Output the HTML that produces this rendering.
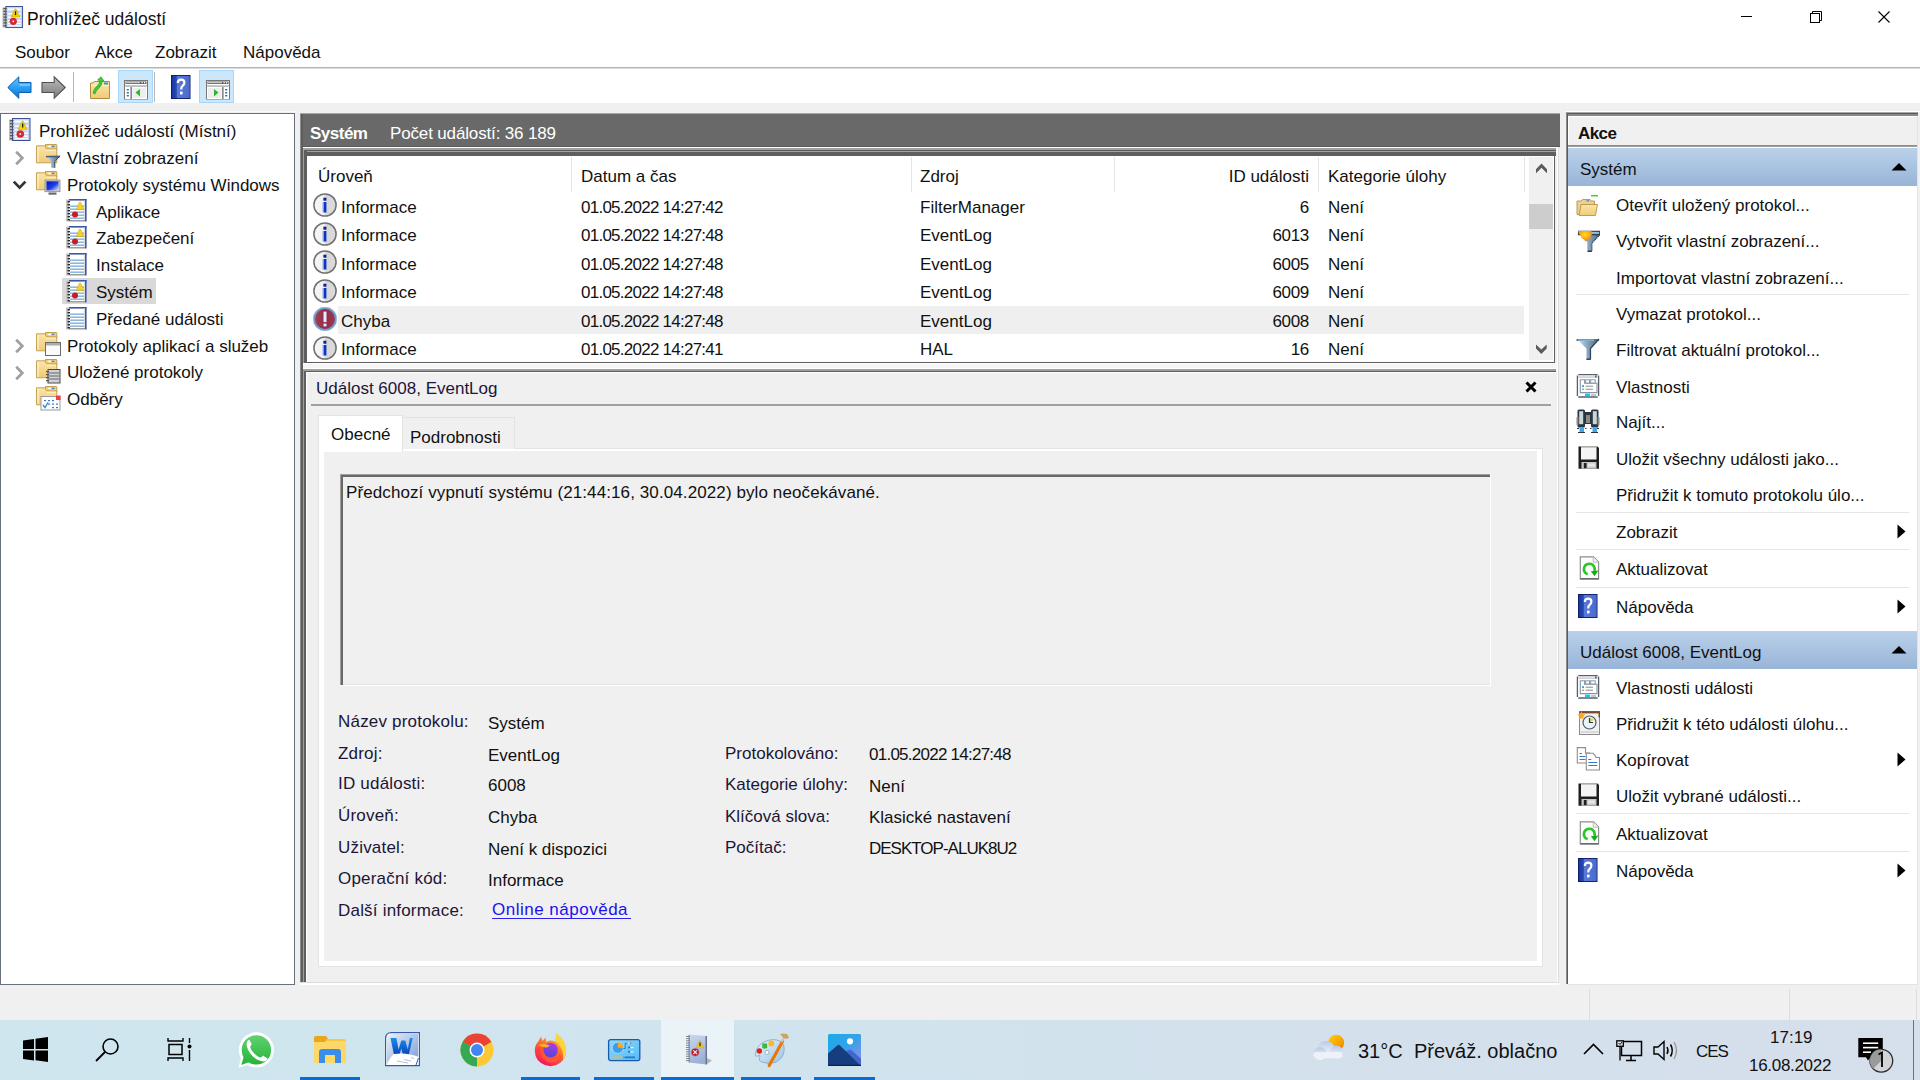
<!DOCTYPE html>
<html><head><meta charset="utf-8">
<style>
*{margin:0;padding:0;box-sizing:border-box}
html,body{width:1920px;height:1080px;overflow:hidden;background:#f0f0f0;font-family:"Liberation Sans",sans-serif;color:#000;position:relative}
.a{position:absolute}
.t{position:absolute;font-size:17px;line-height:20px;white-space:nowrap;color:#111}
svg{position:absolute;overflow:visible}
</style></head><body>
<svg width="0" height="0" style="left:0;top:0">
<defs>
 <linearGradient id="gInfo" x1="0" y1="0" x2="1" y2="0"><stop offset="0" stop-color="#f6f6f6"/><stop offset="0.45" stop-color="#f2f2f2"/><stop offset="0.55" stop-color="#d6d6d6"/><stop offset="1" stop-color="#dcdcdc"/></linearGradient>
 <linearGradient id="gErr" x1="0" y1="0" x2="1" y2="0"><stop offset="0" stop-color="#a2405a"/><stop offset="0.5" stop-color="#962a48"/><stop offset="1" stop-color="#9a3a55"/></linearGradient>
 <linearGradient id="gFold" x1="0" y1="0" x2="0" y2="1"><stop offset="0" stop-color="#fbe5a6"/><stop offset="1" stop-color="#efcb78"/></linearGradient>
 <linearGradient id="gBack" x1="0" y1="0" x2="0" y2="1"><stop offset="0" stop-color="#6cc4ff"/><stop offset="0.5" stop-color="#2aa0f2"/><stop offset="1" stop-color="#0a6ed0"/></linearGradient>
 <linearGradient id="gFwd" x1="0" y1="0" x2="0" y2="1"><stop offset="0" stop-color="#bcbcbc"/><stop offset="1" stop-color="#7a7a7a"/></linearGradient>
 <linearGradient id="gHelp" x1="0" y1="0" x2="1" y2="0"><stop offset="0" stop-color="#1838a8"/><stop offset="0.25" stop-color="#2848b0"/><stop offset="0.3" stop-color="#5a7ad8"/><stop offset="1" stop-color="#4a6ad0"/></linearGradient>
 <linearGradient id="gFunB" x1="0" y1="0" x2="1" y2="0"><stop offset="0" stop-color="#e8f4fc"/><stop offset="0.35" stop-color="#9ab8d0"/><stop offset="1" stop-color="#4a6078"/></linearGradient>
 <linearGradient id="gScr" x1="0" y1="0" x2="1" y2="1"><stop offset="0" stop-color="#0010c8"/><stop offset="0.55" stop-color="#2040e0"/><stop offset="1" stop-color="#e0e8ff"/></linearGradient>

 <symbol id="log" viewBox="0 0 22 24">
  <rect x="1" y="1.5" width="3" height="22" fill="#c4c4c4"/>
  <rect x="4" y="1" width="17.5" height="22.5" fill="#fff"/>
  <rect x="4" y="1" width="17.5" height="1.6" fill="#3b57a8"/>
  <rect x="20" y="1" width="1.6" height="22.5" fill="#3b57a8"/>
  <rect x="4" y="22" width="16" height="1.5" fill="#9c9c9c"/>
  <rect x="18.8" y="2.6" width="1.2" height="19.4" fill="#dcdcdc"/>
  <g fill="#5f9bd0"><rect x="5" y="7.6" width="14" height="1.1"/><rect x="5" y="10.6" width="14" height="1.1"/><rect x="5" y="13.6" width="14" height="1.1"/><rect x="5" y="16.6" width="14" height="1.1"/><rect x="5" y="19.6" width="14" height="1.1"/></g>
  <g fill="#2a2a2a"><rect x="2.5" y="3" width="2.5" height="1.4"/><rect x="2.5" y="6" width="2.5" height="1.4"/><rect x="2.5" y="9" width="2.5" height="1.4"/><rect x="2.5" y="12" width="2.5" height="1.4"/><rect x="2.5" y="15" width="2.5" height="1.4"/><rect x="2.5" y="18" width="2.5" height="1.4"/><rect x="2.5" y="21" width="2.5" height="1.4"/></g>
 </symbol>
 <symbol id="logwe" viewBox="0 0 22 24">
  <use href="#log" width="22" height="24"/>
  <path d="M14.2 4.4 Q15 3.6 15.8 4.4 L18.9 11.6 H11.3 Z" fill="#f2d41e" stroke="#c8a010" stroke-width="0.5"/>
  <circle cx="10" cy="16.6" r="3" fill="#cc1a24"/>
 </symbol>
 <symbol id="logroot" viewBox="0 0 22 24">
  <rect x="0" y="1.5" width="3.5" height="21" fill="#bdbdbd"/>
  <rect x="3" y="0" width="18.5" height="23" fill="#3d4f98"/>
  <rect x="4" y="1" width="16.5" height="21" fill="#c6d6ee"/>
  <g fill="#fff"><rect x="5.5" y="2.5" width="13.5" height="2"/><rect x="5.5" y="7.5" width="13.5" height="1.4"/><rect x="5.5" y="11" width="13.5" height="1.4"/><rect x="5.5" y="14.5" width="13.5" height="1.4"/><rect x="5.5" y="17.5" width="13.5" height="1.4"/><rect x="5.5" y="20" width="13.5" height="1.2"/></g>
  <g fill="#555"><rect x="1" y="2" width="3.5" height="1.3"/><rect x="1" y="5" width="3.5" height="1.3"/><rect x="1" y="8" width="3.5" height="1.3"/><rect x="1" y="11" width="3.5" height="1.3"/><rect x="1" y="14" width="3.5" height="1.3"/><rect x="1" y="17" width="3.5" height="1.3"/><rect x="1" y="20" width="3.5" height="1.3"/></g>
  <path d="M12.8 3.4 Q13.6 2.6 14.4 3.4 L18.2 11.6 H9.1 Z" fill="#f0d20a" stroke="#b89a00" stroke-width="0.5"/>
  <rect x="13" y="5.5" width="1.3" height="4" fill="#222"/>
  <circle cx="11.3" cy="16" r="3.8" fill="#d42a34"/>
  <rect x="10.5" y="15.2" width="1.6" height="1.6" fill="#fff"/>
 </symbol>
 <symbol id="folder" viewBox="0 0 26 26">
  <path d="M9.5 0.5 H20.2 Q20.8 0.5 20.8 1.1 V6 H9.5 Z" fill="#f0cf80" stroke="#bf9640" stroke-width="0.9"/>
  <rect x="12.3" y="1.7" width="3.2" height="1.4" fill="#fff"/><rect x="15.5" y="1.7" width="3" height="1.4" fill="#3d8ce0"/>
  <path d="M0.5 1.8 H9 L10.5 4.8 H20.8 V18.8 H0.5 Z" fill="url(#gFold)" stroke="#c29a48" stroke-width="0.9"/>
  <rect x="1.5" y="3" width="1" height="15" fill="#fff6d8"/>
  <rect x="10.5" y="5.8" width="9.5" height="1" fill="#fff2c8"/>
 </symbol>
 <symbol id="info" viewBox="0 0 24 24">
  <circle cx="12" cy="12" r="11.1" fill="url(#gInfo)" stroke="#727272" stroke-width="1.5"/>
  <rect x="10.4" y="4.7" width="3" height="3" fill="#0a1ea0"/>
  <rect x="10.4" y="9" width="3" height="10.5" fill="#0b35c8"/>
  <rect x="9.2" y="9" width="1.2" height="10.5" fill="#b8c4ec"/>
 </symbol>
 <symbol id="err" viewBox="0 0 24 24">
  <circle cx="12" cy="12" r="10.9" fill="url(#gErr)" stroke="#6f9cc8" stroke-width="2"/>
  <circle cx="12" cy="12" r="12" fill="none" stroke="#b8d4ec" stroke-width="0.6"/>
  <rect x="10.5" y="4.6" width="3" height="10.5" fill="#d8f2ff"/>
  <rect x="10.5" y="16.6" width="3" height="2.8" fill="#d8f2ff"/>
 </symbol>
 <symbol id="help" viewBox="0 0 20 24">
  <rect x="0" y="0" width="19.5" height="24" fill="#0e1a66"/>
  <rect x="0.9" y="0.9" width="17.8" height="22.2" fill="url(#gHelp)"/>
  <path d="M6.8 8 Q6.8 4.6 10.2 4.6 Q13.4 4.6 13.4 7.6 Q13.4 9.6 11.6 10.9 Q10.2 11.9 10.2 14.6" fill="none" stroke="#fff" stroke-width="2.2"/>
  <rect x="9" y="16.6" width="2.6" height="2.8" fill="#fff"/>
 </symbol>
 <symbol id="refresh" viewBox="0 0 24 24">
  <path d="M4.3 0.8 H17.5 L22.6 5.9 V23.2 H4.3 Z" fill="#fcfcfc" stroke="#8e8e8e" stroke-width="1.2"/>
  <path d="M17.2 1 V6.2 H22.4" fill="#f0f0f0" stroke="#b8b8b8" stroke-width="0.9"/>
  <rect x="4.6" y="22" width="17.8" height="1.3" fill="#6a6a6a"/>
  <path d="M11.6 18.3 A5.4 5.4 0 1 1 18.4 15" fill="none" stroke="#28c828" stroke-width="2.7"/>
  <path d="M14.8 15.2 L22.3 14.6 L18.6 20.2 Z" fill="#10b010"/>
 </symbol>
 <symbol id="floppy" viewBox="0 0 24 24">
  <path d="M2.5 0.5 H21.5 L23 2 V22.7 H2.5 Z" fill="#1e1e1e"/>
  <rect x="5" y="0.5" width="15.5" height="13" fill="#f4f4f4"/>
  <rect x="5" y="0.5" width="15.5" height="1" fill="#9a9a9a"/>
  <rect x="5.5" y="16" width="15" height="6.7" fill="#c8c8c8"/>
  <rect x="7.8" y="17" width="2.8" height="5.2" fill="#202020"/>
  <rect x="12" y="17.5" width="7" height="3" fill="#e8e8e8"/>
 </symbol>
 <symbol id="props" viewBox="0 0 24 24">
  <rect x="1.5" y="0.6" width="21" height="22.4" fill="#fff"/>
  <path d="M2.3 0.6 H21.7 M1.4 1.6 V22 M2.3 23 H21.7 M22.6 1.6 V22" stroke="#5a6068" stroke-width="1.3" fill="none"/>
  <rect x="2.2" y="2.2" width="19.5" height="1.8" fill="#d2d6dc"/>
  <rect x="19.2" y="1.4" width="1.4" height="2" fill="#2a4a8a"/>
  <path d="M4.3 5.8 H8.6 V9.3 H21 V18.6 H4.3 Z" stroke="#8c94a4" stroke-width="1.1" fill="#fff"/>
  <rect x="9.6" y="5.8" width="4" height="3.2" stroke="#8c94a4" stroke-width="1" fill="#fff"/>
  <rect x="14.6" y="5.8" width="4.6" height="3.2" stroke="#8c94a4" stroke-width="1" fill="#fff"/>
  <circle cx="7" cy="12.2" r="1.1" fill="#18a8f8"/><circle cx="7" cy="15.2" r="0.8" fill="#666"/>
  <path d="M9.6 12.2 H17 M9.6 15.2 H17" stroke="#8a8a8a" stroke-width="1"/>
  <rect x="9" y="19.6" width="5" height="2.6" fill="#10c8f8"/><rect x="15" y="20" width="5" height="2" fill="#c4c8cc"/>
 </symbol>
 <symbol id="binoc" viewBox="0 0 24 24">
  <g fill="#2c3440"><rect x="1.5" y="0.5" width="7.5" height="18" rx="1.5"/><rect x="15" y="0.5" width="7.5" height="18" rx="1.5"/><rect x="8.5" y="3" width="7" height="12"/></g>
  <g fill="#c8d8d8"><rect x="3.2" y="2.2" width="4" height="13"/><rect x="16.8" y="2.2" width="4" height="13"/></g>
  <g fill="#8a8a8a"><rect x="0.5" y="8" width="2" height="8"/><rect x="21.5" y="8" width="2" height="8"/><rect x="10" y="6" width="4" height="8"/></g>
  <g fill="#3ea8f0"><rect x="3.5" y="18.5" width="4.5" height="5"/><rect x="16.5" y="18.5" width="4.5" height="5"/></g>
  <g fill="#2c3440"><rect x="1" y="19" width="2" height="1"/><rect x="9" y="19" width="1.5" height="1"/><rect x="14" y="19" width="1.5" height="1"/><rect x="21" y="19" width="2" height="1"/><rect x="2" y="23" width="7" height="1"/><rect x="15" y="23" width="7" height="1"/></g>
 </symbol>
 <symbol id="openfold" viewBox="0 0 24 24">
  <rect x="15" y="3" width="7" height="1.5" fill="#38d838"/>
  <path d="M1 9 H5 L6.5 7.5 H14 L14.5 9 H18.5 V22.5 H1 Z" fill="#ecd08e" stroke="#b8924a" stroke-width="0.9"/>
  <rect x="10.5" y="8.2" width="2.5" height="1.3" fill="#3a8ad8"/>
  <path d="M3 23.5 L5 12.5 H21.5 L19.5 23.5 Z" fill="url(#gFold)" stroke="#b8924a" stroke-width="0.9"/>
 </symbol>
 <symbol id="funnelO" viewBox="0 0 24 24">
  <radialGradient id="gSunO" cx="0.5" cy="0.35" r="0.6"><stop offset="0" stop-color="#ffe020"/><stop offset="0.6" stop-color="#ffa810"/><stop offset="1" stop-color="#f08a10"/></radialGradient>
  <path d="M2.2 2.9 H24.3 V6.5 L16 15 V23.5 L11.3 23.8 V14 L3 6.5 Z" fill="url(#gFunB)"/>
  <path d="M2.5 3.2 H24 V6.6 H2.5 Z" fill="none" stroke="#2e3e52" stroke-width="1.1"/>
  <rect x="12" y="4.3" width="11" height="1.3" fill="#a8d8fa"/>
  <path d="M24 6.6 L16 15 V23" fill="none" stroke="#2a3a4e" stroke-width="1.3" stroke-dasharray="1.2 0.8"/>
  <rect x="11.5" y="22.5" width="4.5" height="1.5" rx="0.7" fill="#2a3a4e"/>
  <path d="M2.2 2.9 H15.5 L15.8 6.5 L14 9 L14.5 12 L12 11.5 L9.5 13.5 L8 11.5 L5.5 10 L5 7.5 L3 6 Z" fill="url(#gSunO)"/>
 </symbol>
 <symbol id="funnelB" viewBox="0 0 24 24">
  <path d="M0.5 2 H23 L14.5 11.5 V22.5 L10.5 22.7 V11.5 Z" fill="url(#gFunB)"/>
  <rect x="0.5" y="2" width="22.5" height="2" fill="#5a7088"/>
  <rect x="2" y="2.6" width="16" height="1" fill="#a8d8f8"/>
  <path d="M23 2 L14.5 11.5 V22.5" fill="none" stroke="#2f4258" stroke-width="1.2"/>
  <rect x="10.5" y="21.5" width="4" height="1.5" fill="#2f4258"/>
 </symbol>
 <symbol id="clock" viewBox="0 0 24 24">
  <rect x="3.5" y="0.5" width="20" height="23" fill="#f2f2f2" stroke="#8a8a8a" stroke-width="1"/>
  <rect x="3.5" y="0.2" width="20.5" height="2.2" fill="#7a4a30"/>
  <rect x="22.5" y="0.5" width="1.5" height="6" fill="#7a4a30"/>
  <rect x="4.5" y="20.5" width="18" height="1" fill="#c0c0c0"/>
  <circle cx="13.5" cy="11.5" r="6.5" fill="#e8f4f8" stroke="#505a66" stroke-width="1.2"/>
  <path d="M13.5 11.5 L13.5 6.5 A5 5 0 0 1 18 9 Z" fill="#f0d060"/>
  <path d="M13.5 7 V11.5 H17" stroke="#2a3a50" fill="none" stroke-width="1.2"/>
  <path d="M5.5 0 L6.5 3.2 L9.8 3.5 L7.2 5.6 L8.2 8.8 L5.5 7 L2.8 8.8 L3.8 5.6 L1.2 3.5 L4.5 3.2 Z" fill="#f8a820"/>
 </symbol>
 <symbol id="copy" viewBox="0 0 24 24">
  <path d="M1.3 0.6 H9.5 V6 H13.5 V16 H1.3 Z" fill="#fff" stroke="#8e8e8e" stroke-width="1.1"/>
  <g fill="#3a78c8"><rect x="3.5" y="6" width="2.5" height="1"/><rect x="3.5" y="9" width="6" height="1"/><rect x="3.5" y="12" width="6" height="1"/></g>
  <path d="M10.3 6.3 H17 L19 8.3 L20 10.5 H23.5 V23 H10.3 Z" fill="#fff" stroke="#8e8e8e" stroke-width="1.1"/>
  <g fill="#3a78c8"><rect x="12.3" y="12" width="3" height="1"/><rect x="12.3" y="15" width="9" height="1"/><rect x="12.3" y="18" width="9" height="1"/></g>
 </symbol>
</defs>
</svg>
<div class="a" style="left:0px;top:0px;width:1920px;height:103px;background:#fff;"></div>
<div class="a" style="left:0px;top:67px;width:1920px;height:1px;background:#b4b4b4;"></div>
<div class="a" style="left:0px;top:68px;width:1920px;height:1px;background:#dadada;"></div>
<svg style="left:2px;top:6px;" width="22" height="23"><use href="#logroot" width="22" height="23"/></svg>
<div class="t" style="left:27px;top:9px;font-size:17.5px;">Prohlížeč událostí</div>
<div class="a" style="left:1741px;top:16px;width:11px;height:1px;background:#000;"></div>
<svg style="left:1806px;top:8px;" width="20" height="20" viewBox="0 0 20 20"><rect x="4.5" y="5.5" width="9" height="9" fill="none" stroke="#000"/><path d="M6.5 5.5 V3.5 H15.5 V12.5 H13.5" fill="none" stroke="#000"/></svg>
<svg style="left:1874px;top:7px;" width="20" height="20" viewBox="0 0 20 20"><path d="M4.5 4.5 L15.5 15.5 M15.5 4.5 L4.5 15.5" stroke="#000" stroke-width="1.1"/></svg>
<div class="t" style="left:15px;top:43px;font-size:17px;">Soubor</div>
<div class="t" style="left:95px;top:43px;font-size:17px;">Akce</div>
<div class="t" style="left:155px;top:43px;font-size:17px;">Zobrazit</div>
<div class="t" style="left:243px;top:43px;font-size:17px;">Nápověda</div>
<svg style="left:7px;top:76px;" width="25" height="23" viewBox="0 0 25 23"><path d="M0.8 11.5 L11.8 0.8 V6.5 H24 V16.5 H11.8 V22.3 Z" fill="url(#gBack)" stroke="#0c5cb0" stroke-width="1"/><path d="M12.5 8 H23 V10 H12.5 Z" fill="#9ad8ff" opacity="0.6"/></svg>
<svg style="left:41px;top:76px;" width="25" height="23" viewBox="0 0 25 23"><path d="M24.2 11.5 L13.2 0.8 V6.5 H1 V16.5 H13.2 V22.3 Z" fill="url(#gFwd)" stroke="#505050" stroke-width="1.1"/></svg>
<div class="a" style="left:73px;top:72px;width:1px;height:30px;background:#b8b8b8;"></div>
<svg style="left:89px;top:76px;" width="24" height="24" viewBox="0 0 24 24"><path d="M1.5 7 H4 L5 5.5 H20.5 V22.5 H1.5 Z" fill="url(#gFold)" stroke="#b08a40"/><rect x="15" y="6.5" width="4" height="2" fill="#3d8ce0"/><rect x="2.5" y="9" width="17" height="1" fill="#fff2c8"/><path d="M4 17 Q5 12 9 9 Q11 7 10.5 4.5 L8.5 4 L12 0.8 L15 5 L13 5 Q13.5 9 10 12 Q7 14.5 6 18 Z" fill="#3ccc3c" stroke="#1f9a1f" stroke-width="0.6"/></svg>
<div class="a" style="left:118px;top:70px;width:35px;height:33px;background:#cce6fa;border:1px solid #a8d6fb;"></div>
<div class="a" style="left:154px;top:72px;width:1px;height:30px;background:#b8b8b8;"></div>
<svg style="left:124px;top:80px;" width="24" height="20" viewBox="0 0 24 20"><rect x="0.5" y="0.5" width="23" height="18.5" fill="#fff" stroke="#777" stroke-width="1"/><rect x="1.5" y="1.5" width="21" height="2.5" fill="#5a5a5a"/><rect x="2" y="2.2" width="14" height="1" fill="#e0e0e0"/><g fill="#fff"><rect x="17.5" y="2" width="1.3" height="1.3"/><rect x="20" y="2" width="1.3" height="1.3"/></g><rect x="1.5" y="5" width="21" height="1.6" fill="#7a7a7a"/><rect x="2" y="5.4" width="20" height="0.8" fill="#fff"/><rect x="1" y="7" width="22" height="12" fill="#fff"/><rect x="6.5" y="7" width="1.3" height="12" fill="#6a6a6a"/><rect x="8.5" y="8" width="13.5" height="10" fill="#eeeeee"/><g fill="#2a72c8"><rect x="2.6" y="9" width="2.4" height="1.4" rx="0.6"/><rect x="2.6" y="12" width="2.4" height="1.4" rx="0.6"/><rect x="2.6" y="15" width="2.4" height="1.4" rx="0.6"/></g><path d="M11.5 12.5 L16 9 V16.5 Z" fill="#2cb82c"/></svg>
<svg style="left:171px;top:75px;" width="20" height="24"><use href="#help" width="20" height="24"/></svg>
<div class="a" style="left:199px;top:70px;width:35px;height:33px;background:#cce6fa;border:1px solid #a8d6fb;"></div>
<svg style="left:206px;top:80px;" width="24" height="20" viewBox="0 0 24 20"><rect x="0.5" y="0.5" width="23" height="18.5" fill="#fff" stroke="#777" stroke-width="1"/><rect x="1.5" y="1.5" width="21" height="2.5" fill="#5a5a5a"/><rect x="2" y="2.2" width="14" height="1" fill="#e0e0e0"/><g fill="#fff"><rect x="17.5" y="2" width="1.3" height="1.3"/><rect x="20" y="2" width="1.3" height="1.3"/></g><rect x="1.5" y="5" width="21" height="1.6" fill="#7a7a7a"/><rect x="2" y="5.4" width="20" height="0.8" fill="#fff"/><rect x="1" y="7" width="22" height="12" fill="#fff"/><rect x="16.2" y="7" width="1.3" height="12" fill="#6a6a6a"/><rect x="2" y="8" width="13.5" height="10" fill="#eeeeee"/><g fill="#2a72c8"><rect x="19" y="9" width="2.4" height="1.4" rx="0.6"/><rect x="19" y="12" width="2.4" height="1.4" rx="0.6"/><rect x="19" y="15" width="2.4" height="1.4" rx="0.6"/></g><path d="M12.5 12.5 L8 9 V16.5 Z" fill="#2cb82c"/></svg>
<div class="a" style="left:0px;top:111px;width:296px;height:1px;background:#f8f8f8;"></div>
<div class="a" style="left:0px;top:113px;width:295px;height:872px;background:#fff;border:1px solid #687080;"></div>
<svg style="left:9px;top:118px;" width="22" height="24"><use href="#logroot" width="22" height="24"/></svg>
<div class="t" style="left:39px;top:122px;font-size:17px;">Prohlížeč událostí (Místní)</div>
<div class="a" style="left:62px;top:278px;width:94px;height:26px;background:#d9d9d9;"></div>
<svg style="left:13px;top:150px;" width="12" height="16" viewBox="0 0 12 16"><path d="M3.2 1.8 L9.3 8 L3.2 14.2" fill="none" stroke="#a0a0a0" stroke-width="2.7"/></svg>
<svg style="left:36px;top:144px;" width="26" height="26" viewBox="0 0 26 26"><use href="#folder" width="26" height="26"/><path d="M10 11.8 H24 L18.8 17.5 V23.8 H15.2 V17.5 Z" fill="url(#gFunB)"/><rect x="10" y="11.8" width="14" height="1.6" fill="#4a6078"/><path d="M24 11.8 L18.8 17.5 V23.8" fill="none" stroke="#34495e" stroke-width="1"/></svg>
<div class="t" style="left:67px;top:149px;font-size:17px;">Vlastní zobrazení</div>
<svg style="left:12px;top:178px;" width="16" height="12" viewBox="0 0 16 12"><path d="M1.8 3.6 L7.6 9.6 L13.4 3.6" fill="none" stroke="#333" stroke-width="2.8"/></svg>
<svg style="left:36px;top:171px;" width="26" height="26" viewBox="0 0 26 26"><use href="#folder" width="26" height="26"/><rect x="9" y="9" width="15" height="11.7" fill="#c8c8c8" stroke="#8a8a8a" stroke-width="0.8"/><rect x="10.5" y="10.3" width="12" height="9" fill="url(#gScr)"/><rect x="12.5" y="21.5" width="8" height="2.2" fill="#6a6a6a"/></svg>
<div class="t" style="left:67px;top:176px;font-size:17px;">Protokoly systému Windows</div>
<svg style="left:65px;top:198px;" width="22" height="24"><use href="#logwe" width="22" height="24"/></svg>
<div class="t" style="left:96px;top:203px;font-size:17px;">Aplikace</div>
<svg style="left:65px;top:225px;" width="22" height="24"><use href="#logwe" width="22" height="24"/></svg>
<div class="t" style="left:96px;top:229px;font-size:17px;">Zabezpečení</div>
<svg style="left:65px;top:252px;" width="22" height="24"><use href="#log" width="22" height="24"/></svg>
<div class="t" style="left:96px;top:256px;font-size:17px;">Instalace</div>
<svg style="left:65px;top:279px;" width="22" height="24"><use href="#logwe" width="22" height="24"/></svg>
<div class="t" style="left:96px;top:283px;font-size:17px;">Systém</div>
<svg style="left:65px;top:306px;" width="22" height="24"><use href="#log" width="22" height="24"/></svg>
<div class="t" style="left:96px;top:310px;font-size:17px;">Předané události</div>
<svg style="left:13px;top:338px;" width="12" height="16" viewBox="0 0 12 16"><path d="M3.2 1.8 L9.3 8 L3.2 14.2" fill="none" stroke="#a0a0a0" stroke-width="2.7"/></svg>
<svg style="left:36px;top:332px;" width="26" height="26" viewBox="0 0 26 26"><use href="#folder" width="26" height="26"/><rect x="9.5" y="10.5" width="15" height="13" fill="#fbfbfb" stroke="#6a6a6a" stroke-width="1"/><rect x="10" y="11" width="14" height="2.5" fill="#a8aeb6"/></svg>
<div class="t" style="left:67px;top:337px;font-size:17px;">Protokoly aplikací a služeb</div>
<svg style="left:13px;top:365px;" width="12" height="16" viewBox="0 0 12 16"><path d="M3.2 1.8 L9.3 8 L3.2 14.2" fill="none" stroke="#a0a0a0" stroke-width="2.7"/></svg>
<svg style="left:36px;top:359px;" width="26" height="26" viewBox="0 0 26 26"><use href="#folder" width="26" height="26"/><rect x="12" y="10.5" width="12" height="13.5" fill="#cfd3d8" stroke="#4a4a4a" stroke-width="1"/><g stroke="#5a5a5a" stroke-width="0.9"><line x1="13" y1="14" x2="23" y2="14"/><line x1="13" y1="17" x2="23" y2="17"/><line x1="13" y1="20" x2="23" y2="20"/></g><g fill="#555"><rect x="10" y="12" width="3" height="1.2"/><rect x="10" y="15" width="3" height="1.2"/><rect x="10" y="18" width="3" height="1.2"/><rect x="10" y="21" width="3" height="1.2"/></g></svg>
<div class="t" style="left:67px;top:363px;font-size:17px;">Uložené protokoly</div>
<svg style="left:36px;top:386px;" width="26" height="26" viewBox="0 0 26 26"><use href="#folder" width="26" height="26"/><rect x="5" y="10.5" width="19" height="13.5" fill="#fdfdfd" stroke="#9a9a9a" stroke-width="1"/><rect x="20" y="9.5" width="4.5" height="4.5" fill="#f04040"/><g fill="#3a78d0"><rect x="8" y="14" width="2" height="1.2"/><rect x="12" y="14" width="2" height="1.2"/><rect x="16" y="14" width="2" height="1.2"/><rect x="12" y="17.5" width="2" height="1.2"/><rect x="16" y="17.5" width="2" height="1.2"/><rect x="20" y="17.5" width="2" height="1.2"/><rect x="16" y="21" width="2" height="1.2"/><rect x="20" y="21" width="2" height="1.2"/></g><path d="M7 19 L9 21.5 L12 16.5" stroke="#2a8ad0" fill="none" stroke-width="1.3"/></svg>
<div class="t" style="left:67px;top:390px;font-size:17px;">Odběry</div>
<div class="a" style="left:300px;top:113px;width:1px;height:871px;background:#8c8c8c;"></div>
<div class="a" style="left:301px;top:113px;width:2px;height:871px;background:#5e5e5e;"></div>
<div class="a" style="left:1557px;top:147px;width:1px;height:838px;background:#ffffff;"></div>
<div class="a" style="left:1558px;top:147px;width:1px;height:838px;background:#dcdcdc;"></div>
<div class="a" style="left:300px;top:982px;width:1259px;height:1px;background:#dcdcdc;"></div>
<div class="a" style="left:300px;top:983px;width:1259px;height:2px;background:#ffffff;"></div>
<div class="a" style="left:300px;top:113px;width:1260px;height:1px;background:#a8a8a8;"></div>
<div class="a" style="left:303px;top:114px;width:1257px;height:32px;background:#696969;"></div>
<div class="a" style="left:303px;top:146px;width:1257px;height:1px;background:#5a5a5a;"></div>
<div class="t" style="left:310px;top:124px;font-size:17px;color:#fff;font-weight:bold;letter-spacing:-0.5px;">Systém</div>
<div class="t" style="left:390px;top:124px;font-size:17px;color:#fff;letter-spacing:-0.15px;">Počet událostí: 36 189</div>
<div class="a" style="left:303px;top:147px;width:1254px;height:1px;background:#fff;"></div>
<div class="a" style="left:303px;top:148px;width:1253px;height:2px;background:#a0a0a0;"></div>
<div class="a" style="left:303px;top:150px;width:1253px;height:1px;background:#5a5a5a;"></div>
<div class="a" style="left:303px;top:151px;width:1253px;height:1px;background:#a0a0a0;"></div>
<div class="a" style="left:303px;top:152px;width:1253px;height:4px;background:#5e5e5e;"></div>
<div class="a" style="left:303px;top:148px;width:1px;height:215px;background:#a0a0a0;"></div>
<div class="a" style="left:304px;top:150px;width:3px;height:213px;background:#5e5e5e;"></div>
<div class="a" style="left:307px;top:156px;width:1247px;height:206px;background:#fff;"></div>
<div class="a" style="left:1554px;top:152px;width:1px;height:211px;background:#5e5e5e;"></div>
<div class="a" style="left:304px;top:362px;width:1251px;height:1px;background:#5e5e5e;"></div>
<div class="a" style="left:571px;top:157px;width:1px;height:35px;background:#e5e5e5;"></div>
<div class="a" style="left:911px;top:157px;width:1px;height:35px;background:#e5e5e5;"></div>
<div class="a" style="left:1114px;top:157px;width:1px;height:35px;background:#e5e5e5;"></div>
<div class="a" style="left:1318px;top:157px;width:1px;height:35px;background:#e5e5e5;"></div>
<div class="a" style="left:1524px;top:157px;width:1px;height:35px;background:#e5e5e5;"></div>
<div class="t" style="left:318px;top:167px;font-size:17px;">Úroveň</div>
<div class="t" style="left:581px;top:167px;font-size:17px;">Datum a čas</div>
<div class="t" style="left:920px;top:167px;font-size:17px;">Zdroj</div>
<div class="t" style="right:611px;top:167px;font-size:17px;">ID události</div>
<div class="t" style="left:1328px;top:167px;font-size:17px;">Kategorie úlohy</div>
<div class="a" style="left:338px;top:306px;width:1186px;height:28px;background:#efefef;"></div>
<svg style="left:313.4px;top:193.3px;" width="24" height="24"><use href="#info" width="24" height="24"/></svg>
<div class="t" style="left:341px;top:198px;font-size:17px;">Informace</div>
<div class="t" style="left:581px;top:198px;font-size:17px;letter-spacing:-0.75px;">01.05.2022 14:27:42</div>
<div class="t" style="left:920px;top:198px;font-size:17px;">FilterManager</div>
<div class="t" style="right:611px;top:198px;font-size:17px;letter-spacing:-0.3px;">6</div>
<div class="t" style="left:1328px;top:198px;font-size:17px;">Není</div>
<svg style="left:313.4px;top:221.8px;" width="24" height="24"><use href="#info" width="24" height="24"/></svg>
<div class="t" style="left:341px;top:226px;font-size:17px;">Informace</div>
<div class="t" style="left:581px;top:226px;font-size:17px;letter-spacing:-0.75px;">01.05.2022 14:27:48</div>
<div class="t" style="left:920px;top:226px;font-size:17px;">EventLog</div>
<div class="t" style="right:611px;top:226px;font-size:17px;letter-spacing:-0.3px;">6013</div>
<div class="t" style="left:1328px;top:226px;font-size:17px;">Není</div>
<svg style="left:313.4px;top:250.3px;" width="24" height="24"><use href="#info" width="24" height="24"/></svg>
<div class="t" style="left:341px;top:255px;font-size:17px;">Informace</div>
<div class="t" style="left:581px;top:255px;font-size:17px;letter-spacing:-0.75px;">01.05.2022 14:27:48</div>
<div class="t" style="left:920px;top:255px;font-size:17px;">EventLog</div>
<div class="t" style="right:611px;top:255px;font-size:17px;letter-spacing:-0.3px;">6005</div>
<div class="t" style="left:1328px;top:255px;font-size:17px;">Není</div>
<svg style="left:313.4px;top:278.8px;" width="24" height="24"><use href="#info" width="24" height="24"/></svg>
<div class="t" style="left:341px;top:283px;font-size:17px;">Informace</div>
<div class="t" style="left:581px;top:283px;font-size:17px;letter-spacing:-0.75px;">01.05.2022 14:27:48</div>
<div class="t" style="left:920px;top:283px;font-size:17px;">EventLog</div>
<div class="t" style="right:611px;top:283px;font-size:17px;letter-spacing:-0.3px;">6009</div>
<div class="t" style="left:1328px;top:283px;font-size:17px;">Není</div>
<svg style="left:313.4px;top:307.3px;" width="24" height="24"><use href="#err" width="24" height="24"/></svg>
<div class="t" style="left:341px;top:312px;font-size:17px;">Chyba</div>
<div class="t" style="left:581px;top:312px;font-size:17px;letter-spacing:-0.75px;">01.05.2022 14:27:48</div>
<div class="t" style="left:920px;top:312px;font-size:17px;">EventLog</div>
<div class="t" style="right:611px;top:312px;font-size:17px;letter-spacing:-0.3px;">6008</div>
<div class="t" style="left:1328px;top:312px;font-size:17px;">Není</div>
<svg style="left:313.4px;top:335.8px;" width="24" height="24"><use href="#info" width="24" height="24"/></svg>
<div class="t" style="left:341px;top:340px;font-size:17px;">Informace</div>
<div class="t" style="left:581px;top:340px;font-size:17px;letter-spacing:-0.75px;">01.05.2022 14:27:41</div>
<div class="t" style="left:920px;top:340px;font-size:17px;">HAL</div>
<div class="t" style="right:611px;top:340px;font-size:17px;letter-spacing:-0.3px;">16</div>
<div class="t" style="left:1328px;top:340px;font-size:17px;">Není</div>
<div class="a" style="left:1529px;top:157px;width:24px;height:203px;background:#f0f0f0;"></div>
<div class="a" style="left:1529px;top:204px;width:24px;height:25px;background:#cdcdcd;"></div>
<svg style="left:1530px;top:160px;" width="24" height="20" viewBox="0 0 24 20"><path d="M6 9.2 L11.5 3.6 L17 9.2 V13.2 L11.5 7.8 L6 13.2 Z" fill="#5a5a5a"/></svg>
<svg style="left:1530px;top:340px;" width="24" height="20" viewBox="0 0 24 20"><path d="M6 4.5 L11.3 9.6 L16.7 4.5 V8.5 L11.3 14 L6 8.5 Z" fill="#5a5a5a"/></svg>
<div class="a" style="left:303px;top:363px;width:1254px;height:6px;background:#f6f6f6;"></div>
<div class="a" style="left:303px;top:363px;width:1254px;height:1px;background:#fff;"></div>
<div class="a" style="left:303px;top:368px;width:1254px;height:1px;background:#fff;"></div>
<div class="a" style="left:303px;top:369px;width:1253px;height:2px;background:#a0a0a0;"></div>
<div class="a" style="left:303px;top:371px;width:1253px;height:1px;background:#5e5e5e;"></div>
<div class="a" style="left:303px;top:369px;width:1px;height:613px;background:#a0a0a0;"></div>
<div class="a" style="left:304px;top:371px;width:2px;height:611px;background:#5e5e5e;"></div>
<div class="a" style="left:306px;top:372px;width:1250px;height:1px;background:#fff;"></div>
<div class="a" style="left:306px;top:372px;width:1px;height:610px;background:#fff;"></div>
<div class="a" style="left:307px;top:373px;width:1249px;height:609px;background:#f0f0f0;"></div>
<div class="t" style="left:316px;top:379px;font-size:17px;color:#1c1638;">Událost 6008, EventLog</div>
<svg style="left:1523px;top:379px;" width="16" height="16" viewBox="0 0 16 16"><path d="M3.5 3.5 L12.5 12.5 M12.5 3.5 L3.5 12.5" stroke="#000" stroke-width="3"/></svg>
<div class="a" style="left:311px;top:404px;width:1240px;height:2px;background:#a0a0a0;"></div>
<div class="a" style="left:318px;top:448px;width:1225px;height:519px;background:#e3e3e3;"></div>
<div class="a" style="left:319px;top:449px;width:1223px;height:517px;background:#fff;"></div>
<div class="a" style="left:324px;top:451px;width:1213px;height:510px;background:#f0f0f0;"></div>
<div class="a" style="left:402px;top:417px;width:113px;height:32px;background:#e3e3e3;"></div>
<div class="a" style="left:403px;top:418px;width:111px;height:31px;background:#f0f0f0;"></div>
<div class="a" style="left:318px;top:415px;width:85px;height:36px;background:#e3e3e3;"></div>
<div class="a" style="left:319px;top:416px;width:83px;height:36px;background:#fff;"></div>
<div class="t" style="left:331px;top:425px;font-size:17px;">Obecné</div>
<div class="t" style="left:410px;top:428px;font-size:17px;">Podrobnosti</div>
<div class="a" style="left:340px;top:474px;width:1151px;height:212px;background:#fff;"></div>
<div class="a" style="left:340px;top:474px;width:1150px;height:211px;background:#e3e3e3;"></div>
<div class="a" style="left:340px;top:474px;width:1150px;height:1px;background:#a0a0a0;"></div>
<div class="a" style="left:340px;top:474px;width:1px;height:211px;background:#a0a0a0;"></div>
<div class="a" style="left:341px;top:475px;width:1149px;height:2px;background:#696969;"></div>
<div class="a" style="left:341px;top:475px;width:2px;height:210px;background:#696969;"></div>
<div class="a" style="left:343px;top:477px;width:1147px;height:207px;background:#f0f0f0;"></div>
<div class="t" style="left:346px;top:483px;font-size:17px;letter-spacing:0.1px;">Předchozí vypnutí systému (21:44:16, 30.04.2022) bylo neočekávané.</div>
<div class="t" style="left:338px;top:712px;font-size:17px;color:#1c1638;letter-spacing:0.2px;">Název protokolu:</div>
<div class="t" style="left:338px;top:744px;font-size:17px;color:#1c1638;letter-spacing:0.2px;">Zdroj:</div>
<div class="t" style="left:338px;top:774px;font-size:17px;color:#1c1638;letter-spacing:0.2px;">ID události:</div>
<div class="t" style="left:338px;top:806px;font-size:17px;color:#1c1638;letter-spacing:0.2px;">Úroveň:</div>
<div class="t" style="left:338px;top:838px;font-size:17px;color:#1c1638;letter-spacing:0.2px;">Uživatel:</div>
<div class="t" style="left:338px;top:869px;font-size:17px;color:#1c1638;letter-spacing:0.2px;">Operační kód:</div>
<div class="t" style="left:338px;top:901px;font-size:17px;color:#1c1638;letter-spacing:0.2px;">Další informace:</div>
<div class="t" style="left:488px;top:714px;font-size:17px;">Systém</div>
<div class="t" style="left:488px;top:746px;font-size:17px;">EventLog</div>
<div class="t" style="left:488px;top:776px;font-size:17px;">6008</div>
<div class="t" style="left:488px;top:808px;font-size:17px;">Chyba</div>
<div class="t" style="left:488px;top:840px;font-size:17px;">Není k dispozici</div>
<div class="t" style="left:488px;top:871px;font-size:17px;">Informace</div>
<div class="t" style="left:492px;top:900px;font-size:17px;color:#1a10f0;letter-spacing:0.5px;">Online nápověda</div>
<div class="a" style="left:492px;top:918px;width:139px;height:1px;background:#2a20f0;"></div>
<div class="t" style="left:725px;top:744px;font-size:17px;color:#1c1638;">Protokolováno:</div>
<div class="t" style="left:725px;top:775px;font-size:17px;color:#1c1638;">Kategorie úlohy:</div>
<div class="t" style="left:725px;top:807px;font-size:17px;color:#1c1638;">Klíčová slova:</div>
<div class="t" style="left:725px;top:838px;font-size:17px;color:#1c1638;">Počítač:</div>
<div class="t" style="left:869px;top:745px;font-size:17px;letter-spacing:-0.75px;">01.05.2022 14:27:48</div>
<div class="t" style="left:869px;top:777px;font-size:17px;">Není</div>
<div class="t" style="left:869px;top:808px;font-size:17px;">Klasické nastavení</div>
<div class="t" style="left:869px;top:839px;font-size:17px;letter-spacing:-1px;">DESKTOP-ALUK8U2</div>
<div class="a" style="left:1565px;top:111px;width:355px;height:1px;background:#fff;"></div>
<div class="a" style="left:1566px;top:112px;width:352px;height:1px;background:#a8a8a8;"></div>
<div class="a" style="left:1566px;top:113px;width:352px;height:1px;background:#5a5a5a;"></div>
<div class="a" style="left:1566px;top:114px;width:352px;height:2px;background:#888;"></div>
<div class="a" style="left:1566px;top:112px;width:1px;height:872px;background:#8c8c8c;"></div>
<div class="a" style="left:1567px;top:113px;width:1px;height:871px;background:#5a5a5a;"></div>
<div class="a" style="left:1568px;top:116px;width:350px;height:868px;background:#fff;"></div>
<div class="a" style="left:1569px;top:117px;width:348px;height:28px;background:#f0f0f0;"></div>
<div class="a" style="left:1917px;top:116px;width:1px;height:868px;background:#e3e3e3;"></div>
<div class="a" style="left:1568px;top:984px;width:350px;height:1px;background:#e3e3e3;"></div>
<div class="t" style="left:1578px;top:124px;font-size:17px;font-weight:bold;letter-spacing:-0.6px;">Akce</div>
<div class="a" style="left:1568px;top:145px;width:349px;height:1px;background:#8c8c8c;"></div>
<div class="a" style="left:1568px;top:146px;width:349px;height:1px;background:#a0a0a0;"></div>
<div class="a" style="left:1568px;top:147px;width:349px;height:1px;background:#fff;"></div>
<div class="a" style="left:1568px;top:148px;width:349px;height:38px;background:linear-gradient(#bad1ea,#98b4d7);"></div>
<div class="t" style="left:1580px;top:160px;font-size:17px;">Systém</div>
<svg style="left:1890px;top:162px;" width="18" height="10" viewBox="0 0 18 10"><path d="M1.5 8.5 L9 1 L16.5 8.5 Z" fill="#000"/></svg>
<svg style="left:1576px;top:192px;" width="24" height="24"><use href="#openfold" width="24" height="24"/></svg>
<div class="t" style="left:1616px;top:196px;font-size:17px;">Otevřít uložený protokol...</div>
<svg style="left:1576px;top:228px;" width="24" height="24"><use href="#funnelO" width="24" height="24"/></svg>
<div class="t" style="left:1616px;top:232px;font-size:17px;">Vytvořit vlastní zobrazení...</div>
<div class="t" style="left:1616px;top:269px;font-size:17px;">Importovat vlastní zobrazení...</div>
<div class="t" style="left:1616px;top:305px;font-size:17px;">Vymazat protokol...</div>
<svg style="left:1576px;top:337px;" width="24" height="24"><use href="#funnelB" width="24" height="24"/></svg>
<div class="t" style="left:1616px;top:341px;font-size:17px;">Filtrovat aktuální protokol...</div>
<svg style="left:1576px;top:374px;" width="24" height="24"><use href="#props" width="24" height="24"/></svg>
<div class="t" style="left:1616px;top:378px;font-size:17px;">Vlastnosti</div>
<svg style="left:1576px;top:409px;" width="24" height="24"><use href="#binoc" width="24" height="24"/></svg>
<div class="t" style="left:1616px;top:413px;font-size:17px;">Najít...</div>
<svg style="left:1576px;top:446px;" width="24" height="24"><use href="#floppy" width="24" height="24"/></svg>
<div class="t" style="left:1616px;top:450px;font-size:17px;">Uložit všechny události jako...</div>
<div class="t" style="left:1616px;top:486px;font-size:17px;">Přidružit k tomuto protokolu úlo...</div>
<div class="t" style="left:1616px;top:523px;font-size:17px;">Zobrazit</div>
<svg style="left:1576px;top:556px;" width="24" height="24"><use href="#refresh" width="24" height="24"/></svg>
<div class="t" style="left:1616px;top:560px;font-size:17px;">Aktualizovat</div>
<svg style="left:1578px;top:594px;" width="20" height="24"><use href="#help" width="20" height="24"/></svg>
<div class="t" style="left:1616px;top:598px;font-size:17px;">Nápověda</div>
<div class="a" style="left:1576px;top:294px;width:333px;height:1px;background:#e6e6e6;"></div>
<div class="a" style="left:1576px;top:512px;width:333px;height:1px;background:#e6e6e6;"></div>
<div class="a" style="left:1576px;top:549px;width:333px;height:1px;background:#e6e6e6;"></div>
<div class="a" style="left:1576px;top:587px;width:333px;height:1px;background:#e6e6e6;"></div>
<svg style="left:1897px;top:524px;" width="9" height="15" viewBox="0 0 9 15"><path d="M0.5 0.5 L8.5 7.5 L0.5 14.5 Z" fill="#000"/></svg>
<svg style="left:1897px;top:599px;" width="9" height="15" viewBox="0 0 9 15"><path d="M0.5 0.5 L8.5 7.5 L0.5 14.5 Z" fill="#000"/></svg>
<div class="a" style="left:1568px;top:631px;width:349px;height:38px;background:linear-gradient(#bad1ea,#98b4d7);"></div>
<div class="t" style="left:1580px;top:643px;font-size:17px;">Událost 6008, EventLog</div>
<svg style="left:1890px;top:645px;" width="18" height="10" viewBox="0 0 18 10"><path d="M1.5 8.5 L9 1 L16.5 8.5 Z" fill="#000"/></svg>
<svg style="left:1576px;top:675px;" width="24" height="24"><use href="#props" width="24" height="24"/></svg>
<div class="t" style="left:1616px;top:679px;font-size:17px;">Vlastnosti události</div>
<svg style="left:1576px;top:711px;" width="24" height="24"><use href="#clock" width="24" height="24"/></svg>
<div class="t" style="left:1616px;top:715px;font-size:17px;">Přidružit k této události úlohu...</div>
<svg style="left:1576px;top:747px;" width="24" height="24"><use href="#copy" width="24" height="24"/></svg>
<div class="t" style="left:1616px;top:751px;font-size:17px;">Kopírovat</div>
<svg style="left:1576px;top:783px;" width="24" height="24"><use href="#floppy" width="24" height="24"/></svg>
<div class="t" style="left:1616px;top:787px;font-size:17px;">Uložit vybrané události...</div>
<svg style="left:1576px;top:821px;" width="24" height="24"><use href="#refresh" width="24" height="24"/></svg>
<div class="t" style="left:1616px;top:825px;font-size:17px;">Aktualizovat</div>
<svg style="left:1578px;top:858px;" width="20" height="24"><use href="#help" width="20" height="24"/></svg>
<div class="t" style="left:1616px;top:862px;font-size:17px;">Nápověda</div>
<div class="a" style="left:1576px;top:813px;width:333px;height:1px;background:#e6e6e6;"></div>
<div class="a" style="left:1576px;top:851px;width:333px;height:1px;background:#e6e6e6;"></div>
<svg style="left:1897px;top:752px;" width="9" height="15" viewBox="0 0 9 15"><path d="M0.5 0.5 L8.5 7.5 L0.5 14.5 Z" fill="#000"/></svg>
<svg style="left:1897px;top:863px;" width="9" height="15" viewBox="0 0 9 15"><path d="M0.5 0.5 L8.5 7.5 L0.5 14.5 Z" fill="#000"/></svg>
<div class="a" style="left:1589px;top:989px;width:1px;height:31px;background:#dcdcdc;"></div>
<div class="a" style="left:1789px;top:989px;width:1px;height:31px;background:#dcdcdc;"></div>
<div class="a" style="left:1916px;top:989px;width:1px;height:31px;background:#dcdcdc;"></div>
<div class="a" style="left:0px;top:1020px;width:1920px;height:60px;background:linear-gradient(90deg,#cfe6ef 0%,#d0e4ee 40%,#d4e0ec 75%,#d6dfec 100%);"></div>
<div class="a" style="left:661px;top:1020px;width:73px;height:60px;background:rgba(255,255,255,0.55);"></div>
<div class="a" style="left:300px;top:1077px;width:60px;height:3px;background:#0a6cd2;"></div>
<div class="a" style="left:521px;top:1077px;width:59px;height:3px;background:#0a6cd2;"></div>
<div class="a" style="left:594px;top:1077px;width:60px;height:3px;background:#0a6cd2;"></div>
<div class="a" style="left:661px;top:1077px;width:73px;height:3px;background:#0a6cd2;"></div>
<div class="a" style="left:741px;top:1077px;width:60px;height:3px;background:#0a6cd2;"></div>
<div class="a" style="left:814px;top:1077px;width:61px;height:3px;background:#0a6cd2;"></div>
<svg style="left:23px;top:1037px;" width="26" height="26" viewBox="0 0 26 26"><path d="M0 3.5 L11 2 V12 H0 Z M12.5 1.8 L25 0 V12 H12.5 Z M0 13.5 H11 V23.5 L0 22 Z M12.5 13.5 H25 V25 L12.5 23.3 Z" fill="#000"/></svg>
<svg style="left:95px;top:1037px;" width="26" height="26" viewBox="0 0 26 26"><circle cx="15.5" cy="9.5" r="7.5" fill="none" stroke="#000" stroke-width="1.6"/><path d="M10 15 L1 24" stroke="#000" stroke-width="1.8"/></svg>
<svg style="left:167px;top:1037px;" width="26" height="26" viewBox="0 0 26 26"><path d="M1 1 V4 H16 V1 M1 24 V21 H16 V24" fill="none" stroke="#000" stroke-width="1.4"/><rect x="2" y="7.5" width="13" height="10" fill="none" stroke="#000" stroke-width="1.5"/><path d="M22.5 1 V6 M22.5 13 V24" stroke="#000" stroke-width="1.4"/><circle cx="22.5" cy="9.5" r="2" fill="#000"/></svg>
<svg style="left:238px;top:1031px;" width="37" height="37" viewBox="0 0 37 37"><defs><linearGradient id="gWa" x1="0" y1="0" x2="0" y2="1"><stop offset="0" stop-color="#5fd36e"/><stop offset="1" stop-color="#27b33a"/></linearGradient></defs><circle cx="18.4" cy="18.9" r="17.6" fill="#fff"/><path d="M0.7 36.5 L3.5 24 L13 33 Z" fill="#fff"/><circle cx="18.4" cy="18.9" r="14.7" fill="url(#gWa)"/><path d="M3.3 34 L5.8 25.5 L11.5 31 Z" fill="#2db83d"/><path d="M11.2 8.5 Q8.3 10 8.6 14 Q9.5 20 14.5 25 Q19.5 30 25 30.5 Q29 30.5 29.5 27.5 L25 24.5 Q23.5 26.8 22 26.5 Q18.5 25 15.8 22 Q12.5 18.5 12.2 16 Q12.6 14.5 13.8 13.3 Z" fill="#fff"/></svg>
<svg style="left:313px;top:1036px;" width="34" height="28" viewBox="0 0 34 28"><path d="M1 2 Q1 0 3 0 H13 L15 3 H31 Q33 3 33 5 V25 Q33 27 31 27 H3 Q1 27 1 25 Z" fill="#f8c93a"/><path d="M1 5 H33 V25 Q33 27 31 27 H3 Q1 27 1 25 Z" fill="#fdd868"/><path d="M1 2 Q1 0 3 0 H13 L15 3 H14 L12 6 H1 Z" fill="#e8a81a"/><path d="M6 27 V16 Q6 13 9 13 H25 Q28 13 28 16 V27 H22 V19 H12 V27 Z" fill="#3a8de8"/></svg>
<svg style="left:385px;top:1032px;" width="36" height="35" viewBox="0 0 36 35"><defs><linearGradient id="gWd" x1="0" y1="0" x2="1" y2="1"><stop offset="0" stop-color="#eaf0fa"/><stop offset="1" stop-color="#7a9ad8"/></linearGradient><linearGradient id="gWW" x1="0" y1="0" x2="0" y2="1"><stop offset="0" stop-color="#1690e8"/><stop offset="1" stop-color="#0a3ab8"/></linearGradient></defs><path d="M6.5 0.6 H34.4 V33.6 H0.6 V6.5 Q0.6 0.6 6.5 0.6 Z" fill="#fff" stroke="#3a5aa8" stroke-width="1.2"/><path d="M7 2 H33 V32 H2 V7 Q2 2 7 2 Z" fill="url(#gWd)"/><path d="M5.5 5.9 H11.4 L13.6 17.5 L16.3 8.5 H20.3 L22.8 17.5 L24.9 5.9 H27.7 L23.3 24.7 H18.6 L18.2 23.5 L16.2 16.5 L14 24.7 H9.4 Z" fill="url(#gWW)"/><path d="M1.5 33 Q5 25 9 22 Q22 20 34 25 L33 33 Z" fill="#fff"/><path d="M12 29 L23 31 M19 27.5 L26 29 M26 25.5 L29 26.5" stroke="#9ab0d8" stroke-width="0.8"/><path d="M33.5 26 L31 33" stroke="#2a5ab0" stroke-width="1"/></svg>
<svg style="left:460px;top:1033px;" width="34" height="34" viewBox="0 0 34 34"><circle cx="17" cy="17" r="16.5" fill="#fcc934"/><path d="M17 17 L2.7 8.75 A16.5 16.5 0 0 1 31.3 8.75 Z" fill="#ea4335"/><path d="M17 17 L2.7 8.75 A16.5 16.5 0 0 0 17 33.5 Z" fill="#34a853"/><path d="M17 17 L31.3 8.75 L24 8.75 Z" fill="#ea4335"/><path d="M2.7 8.75 L10.3 20.5 L17 17 Z" fill="#34a853"/><path d="M17 33.5 L24 21 L17 17 Z" fill="#fcc934"/><circle cx="17" cy="17" r="7.5" fill="#fff"/><circle cx="17" cy="17" r="6" fill="#4285f4"/></svg>
<svg style="left:534px;top:1033px;" width="34" height="34" viewBox="0 0 34 34"><defs><linearGradient id="gFx" x1="0.8" y1="0.1" x2="0.3" y2="1"><stop offset="0" stop-color="#ffc82e"/><stop offset="0.45" stop-color="#ff6a2a"/><stop offset="0.85" stop-color="#ff2a50"/><stop offset="1" stop-color="#e0106a"/></linearGradient><linearGradient id="gFp" x1="0.5" y1="0" x2="0.3" y2="1"><stop offset="0" stop-color="#b03ae8"/><stop offset="1" stop-color="#4a48d8"/></linearGradient></defs><path d="M4 9 L7 3.5 L8.5 8 L11.5 4.5 L12.5 9 Q16 6.5 21 8.5 Q23 1 21.5 0 Q30 5 32 15 Q33 25 26 30 Q19 35 11 32 Q1 28 0.8 18 Q0.8 12 4 9 Z" fill="url(#gFx)"/><path d="M21.5 0 Q30 5 32 15 Q33 22 29 27 Q30 18 25 12 Q22 8 21 8.5 Q23 1 21.5 0 Z" fill="#ffd43a"/><circle cx="16.5" cy="17" r="7.3" fill="url(#gFp)"/><path d="M4 12 Q9 10.5 13 11.5 Q14.5 12.5 16 12 Q14 15 11.5 14.5 Q8 14 4 12 Z" fill="#ffb020"/><path d="M9 15 Q10 25 18 25.5 Q24 25.5 26 20 Q27 26 21 29 Q12 31 8 24 Q6.5 19 9 15 Z" fill="#ff5a34" opacity="0.8"/></svg>
<svg style="left:608px;top:1039px;" width="33" height="23" viewBox="0 0 33 23"><defs><linearGradient id="gCp" x1="0" y1="0" x2="1" y2="1"><stop offset="0" stop-color="#8ad8fc"/><stop offset="1" stop-color="#58bcf6"/></linearGradient></defs><rect x="0.6" y="0.6" width="31.2" height="21" rx="2" fill="url(#gCp)" stroke="#1a5aa8" stroke-width="1.3"/><circle cx="9.8" cy="8.8" r="5.5" fill="#3a9ee8" stroke="#e8f6ff" stroke-width="0.8" stroke-dasharray="1.5 0.8"/><path d="M9.8 8.8 V3.3 A5.5 5.5 0 0 1 15.3 8.8 Z" fill="#ffa818"/><path d="M15.3 9.5 H17.2 V4.3 H20" stroke="#1a6ab8" stroke-width="0.8" fill="none"/><circle cx="22.5" cy="4.3" r="1" fill="#ff6a20"/><rect x="19.5" y="3.7" width="2" height="1.2" fill="#e8f6ff"/><path d="M20.5 7.3 L22.3 8.5 L20.5 9.7 Z M20.5 11.6 L22.3 12.8 L20.5 14 Z" fill="#0a4aa0"/><rect x="22.5" y="8" width="3" height="1.2" fill="#e8f6ff"/><rect x="22.5" y="12.3" width="3" height="1.2" fill="#e8f6ff"/><rect x="4.5" y="17.5" width="10" height="1.7" fill="#f8b040"/><rect x="15" y="17.5" width="1" height="1.7" fill="#20a8f0"/><rect x="16.5" y="17.5" width="10.5" height="1.7" fill="#1a7ad0"/></svg>
<svg style="left:686px;top:1034px;" width="27" height="32" viewBox="0 0 27 32"><defs><linearGradient id="gEv" x1="0" y1="0" x2="0.3" y2="1"><stop offset="0" stop-color="#ccd9ee"/><stop offset="1" stop-color="#9ab0d6"/></linearGradient></defs><path d="M21 24 L26 26.5 L21 30 Z" fill="#9a9a9a" opacity="0.7"/><path d="M2.5 0.5 L20.5 2 V30.5 L3 28.5 Z" fill="url(#gEv)"/><path d="M19.5 1.9 L21 2 V30.5 L19.5 30.3 Z" fill="#6a7490"/><path d="M3.2 1 V28.5" stroke="#7090d0" stroke-width="1.2"/><g fill="#7a7a7a"><rect x="0" y="2" width="3.5" height="0.9"/><rect x="0" y="4.2" width="3.5" height="0.9"/><rect x="0" y="6.4" width="3.5" height="0.9"/><rect x="0" y="8.6" width="3.5" height="0.9"/><rect x="0" y="10.8" width="3.5" height="0.9"/><rect x="0" y="13" width="3.5" height="0.9"/><rect x="0" y="15.2" width="3.5" height="0.9"/><rect x="0" y="17.4" width="3.5" height="0.9"/><rect x="0" y="19.6" width="3.5" height="0.9"/><rect x="0" y="21.8" width="3.5" height="0.9"/><rect x="0" y="24" width="3.5" height="0.9"/><rect x="0" y="26.2" width="3.5" height="0.9"/></g><path d="M14 6.5 L18 14 H10 Z" fill="#f4c818" stroke="#c89a00" stroke-width="0.4"/><rect x="13.3" y="8.5" width="1.4" height="3.8" fill="#3a3a3a"/><circle cx="9.2" cy="18.2" r="4" fill="#c8101a" stroke="#8ac8e8" stroke-width="0.5"/><path d="M7.4 16.4 L11 20 M11 16.4 L7.4 20" stroke="#d8eef8" stroke-width="1.2"/></svg>
<svg style="left:754px;top:1033px;" width="35" height="34" viewBox="0 0 35 34"><defs><linearGradient id="gPl" x1="0" y1="0" x2="1" y2="1"><stop offset="0" stop-color="#eaf4fb"/><stop offset="1" stop-color="#98c4e4"/></linearGradient></defs><path d="M8 29 Q4 28 6 23.5 Q7 22 4 23 Q0.5 24 1.5 20 Q3 12 11 8.5 Q19 5 26 8 Q31 11 30 18.5 Q29 26 21 29.5 Q14 31.5 8 29 Z" fill="url(#gPl)" stroke="#7aa6cc" stroke-width="0.8"/><circle cx="13" cy="19.4" r="2" fill="#fff" stroke="#5a7a9a" stroke-width="0.5"/><circle cx="5.4" cy="18" r="2.7" fill="#e8201a"/><path d="M8.2 10.6 L13 10.4 L13.2 15 L10.5 15.8 L8.3 15 Z" fill="#3cb83c"/><circle cx="17.3" cy="10.5" r="2.9" fill="#ffb820"/><path d="M15.2 32.5 L28.5 8.5" stroke="#e8780a" stroke-width="3.2" stroke-linecap="round"/><path d="M27.5 9 L30.5 3.8" stroke="#c8c8c8" stroke-width="2.2"/><path d="M29 4.5 L26 1 Q29 0 33 1 L35 4.5 Q33 6.5 31 5.5 Z" fill="#d4a060"/></svg>
<svg style="left:828px;top:1034px;" width="33" height="32" viewBox="0 0 33 32"><defs><linearGradient id="gPh" x1="0" y1="0" x2="1" y2="1"><stop offset="0" stop-color="#1aaae8"/><stop offset="0.5" stop-color="#34a2e8"/><stop offset="1" stop-color="#a08ae8"/></linearGradient></defs><rect x="0" y="0" width="33" height="32" rx="1.5" fill="url(#gPh)"/><circle cx="22" cy="7.3" r="3.1" fill="#fff"/><path d="M14 19 L21.3 15.8 Q22.2 15.3 23 16 L33 24.5 V32 H22 Z" fill="#4466cc"/><path d="M0 19.5 L9.5 11.2 Q10.6 10.4 11.7 11.2 L33 32 H0 Z" fill="#163e7e"/><rect x="0" y="30.8" width="33" height="1.2" fill="#0a1e5a"/></svg>
<svg style="left:1312px;top:1036px;" width="33" height="23" viewBox="0 0 33 23"><defs><linearGradient id="gSun" x1="0" y1="0" x2="1" y2="1"><stop offset="0" stop-color="#ffd400"/><stop offset="0.7" stop-color="#f59a00"/><stop offset="1" stop-color="#e85a00"/></linearGradient><linearGradient id="gCl" x1="0" y1="0" x2="0" y2="1"><stop offset="0" stop-color="#b8cae6"/><stop offset="0.5" stop-color="#d8e2f2"/><stop offset="1" stop-color="#f2f5fa"/></linearGradient></defs><circle cx="24.2" cy="6.6" r="7.9" fill="url(#gSun)"/><ellipse cx="14" cy="12.5" rx="8.5" ry="7.5" fill="url(#gCl)"/><circle cx="24.5" cy="16" r="6.5" fill="url(#gCl)"/><circle cx="8" cy="17.5" r="6.5" fill="url(#gCl)"/><rect x="1.5" y="16" width="29" height="6.3" rx="3.2" fill="#eef2f8"/></svg>
<div class="t" style="left:1358px;top:1041px;font-size:20px;">31°C</div>
<div class="t" style="left:1414px;top:1041px;font-size:20px;">Převáž. oblačno</div>
<svg style="left:1583px;top:1043px;" width="21" height="13" viewBox="0 0 21 13"><path d="M1 11 L10.5 1.5 L20 11" fill="none" stroke="#000" stroke-width="1.6"/></svg>
<svg style="left:1616px;top:1040px;" width="27" height="22" viewBox="0 0 27 22"><rect x="5.5" y="1.5" width="20" height="14" fill="none" stroke="#000" stroke-width="1.5"/><path d="M10 20.5 H20 M15 16 V20.5" stroke="#000" stroke-width="1.5"/><rect x="0.8" y="0.8" width="6.5" height="5.5" fill="#d8e2ec" stroke="#000" stroke-width="1.3"/><path d="M4 6.5 V20.5" stroke="#000" stroke-width="1.3"/><path d="M2.5 3 L4 4.5 L6 2" stroke="#000" stroke-width="0.9" fill="none"/></svg>
<svg style="left:1653px;top:1040px;" width="26" height="21" viewBox="0 0 26 21"><path d="M1 7 H5 L11 1.5 V19.5 L5 14 H1 Z" fill="none" stroke="#000" stroke-width="1.4"/><path d="M14 7 Q16 10.5 14 14" fill="none" stroke="#000" stroke-width="1.5"/><path d="M17.5 4.5 Q21 10.5 17.5 16.5" fill="none" stroke="#000" stroke-width="1.5"/><path d="M21 2 Q26 10.5 21 19" fill="none" stroke="#999" stroke-width="1.3"/></svg>
<div class="t" style="left:1696px;top:1042px;font-size:17px;letter-spacing:-1px;">CES</div>
<div class="t" style="left:1770px;top:1028px;font-size:17px;">17:19</div>
<div class="t" style="left:1749px;top:1056px;font-size:17px;letter-spacing:-0.3px;">16.08.2022</div>
<svg style="left:1856px;top:1036px;" width="50" height="40" viewBox="0 0 50 40"><path d="M2.3 2.1 H26.8 V21.3 H14.5 L12 24.5 L10 21.3 H2.3 Z" fill="#000"/><g stroke="#fff" stroke-width="1.6"><line x1="7" y1="7.2" x2="22.2" y2="7.2"/><line x1="7" y1="11.6" x2="22.2" y2="11.6"/><line x1="7" y1="16.2" x2="15" y2="16.2"/></g><circle cx="25.3" cy="24.7" r="11.4" fill="#d2d4d8" stroke="#2a2a2a" stroke-width="1.3"/><path d="M25.3 24.7 L17.2 32.8 A11.4 11.4 0 0 1 25.3 13.3 Z" fill="#9a9a9a"/><path d="M22.5 18.5 L26 16.5 V31" stroke="#000" stroke-width="1.8" fill="none"/></svg>
<div class="a" style="left:1913px;top:1020px;width:1px;height:60px;background:#6a7280;"></div>
</body></html>
